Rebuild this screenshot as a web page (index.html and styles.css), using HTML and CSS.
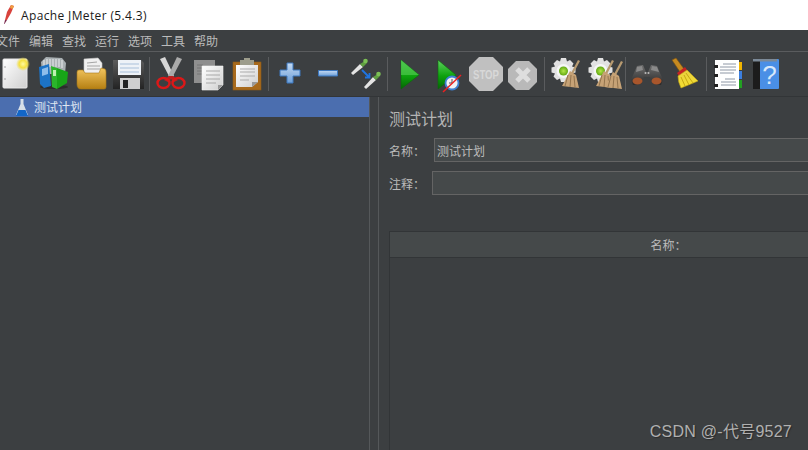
FILE: index.html
```html
<!DOCTYPE html>
<html lang="zh">
<head>
<meta charset="utf-8">
<title>Apache JMeter (5.4.3)</title>
<link rel="stylesheet" href="styles.css">
</head>
<body>
<div class="app">
  <header class="titlebar">
    <svg class="title-icon" width="14" height="20" viewBox="0 0 14 20"><path d="M10 0 L13 1 L10 8 L6 15 L4 15 L6 7 Z" fill="#d8423c"/><path d="M10 0 L13 1 L11.500 4 L9 3 Z" fill="#f0a040"/><path d="M4 15 L6 15 L3.500 19 L3 19 Z" fill="#7b2a4e"/></svg>
    <span class="title-text">Apache JMeter (5.4.3)</span>
  </header>
  <nav class="menubar">
    <span class="menu-item">文件</span><span class="menu-item">编辑</span><span class="menu-item">查找</span><span class="menu-item">运行</span><span class="menu-item">选项</span><span class="menu-item">工具</span><span class="menu-item">帮助</span>
  </nav>
  <div class="toolbar">
    <svg class="shared-defs" width="0" height="0">
      <defs>
        <linearGradient id="gPage" x1="0" y1="0" x2="1" y2="1"><stop offset="0" stop-color="#fff"/><stop offset="1" stop-color="#cfcfcf"/></linearGradient>
        <linearGradient id="gFolder" x1="0" y1="0" x2="0" y2="1"><stop offset="0" stop-color="#f3c65f"/><stop offset="1" stop-color="#b57f12"/></linearGradient>
        <linearGradient id="gPlay" x1="0" y1="0" x2="0" y2="1"><stop offset="0" stop-color="#5fd35f"/><stop offset=".55" stop-color="#0da20d"/><stop offset="1" stop-color="#056505"/></linearGradient>
        <linearGradient id="gBlue" x1="0" y1="0" x2="0" y2="1"><stop offset="0" stop-color="#c4daf3"/><stop offset="1" stop-color="#6d9fd8"/></linearGradient>
        <linearGradient id="gBroom" x1="0" y1="0" x2="0" y2="1"><stop offset="0" stop-color="#e8d040"/><stop offset="1" stop-color="#f5e030"/></linearGradient>
        <linearGradient id="gDisk" x1="0" y1="0" x2="0" y2="1"><stop offset="0" stop-color="#5c5c5c"/><stop offset="1" stop-color="#232323"/></linearGradient>
        <linearGradient id="gBino" x1="0" y1="0" x2="0" y2="1"><stop offset="0" stop-color="#6e6e6e"/><stop offset="1" stop-color="#2a2a2a"/></linearGradient>
        <radialGradient id="gGlow"><stop offset="0" stop-color="#fff9a0"/><stop offset=".55" stop-color="#f4e040"/><stop offset="1" stop-color="#f4e040" stop-opacity="0"/></radialGradient>
        <radialGradient id="gGreen"><stop offset="0" stop-color="#b4e84a"/><stop offset="1" stop-color="#62a812"/></radialGradient>
        <g id="gear"><path d="M11 0h5l1 3.500 3-1.500 3.500 3.500-1.500 3 3.500 1v5l-3.500 1 1.500 3-3.500 3.500-3-1.500-1 3.500h-5l-1-3.500-3 1.500-3.500-3.500 1.500-3-3.500-1v-5l3.500-1-1.500-3 3.500-3.500 3 1.500z" fill="#e2e2e2"/><circle cx="13.500" cy="13" r="7" fill="#f6f6f6"/><circle cx="13.500" cy="13" r="4.500" fill="url(#gGreen)"/></g>
        <g id="broomBrown"><path d="M16 0 L18 1 L11 14 L9 13 Z" fill="#b79a70"/><path d="M8 11 L14 15 L17 28 L0 26 Z" fill="#c6a276"/><path d="M6 15 L3 26 M9 15 L8 27 M12 16 L13 27" stroke="#93744e" fill="none"/></g>
      </defs>
    </svg>
    <!-- new -->
    <svg class="tool" viewBox="0 0 38 44"><rect x="8" y="7" width="24" height="29" rx="1" fill="url(#gPage)" stroke="#e8e8e8"/><circle cx="10" cy="15" r=".8" fill="#999"/><circle cx="10" cy="27" r=".8" fill="#999"/><circle cx="28" cy="12" r="7" fill="url(#gGlow)"/></svg>
    <!-- books -->
    <svg class="tool" viewBox="0 0 38 44"><ellipse cx="21" cy="35" rx="14" ry="2" fill="#2c2c2c"/><path d="M8 10 L13 5 L29 6 L33 11 L32 22 L9 22 Z" fill="#a9b0b3"/><path d="M11 8v8M14 7v8M17 7v8M20 7v8M23 7v8M26 7v8M29 8v8" stroke="#dfe3e4" stroke-width="1.200"/><path d="M6 15 L16 12 L18 34 L11 36 L7 32 Z" fill="#1c73c6"/><path d="M9 17 L15 15 L15 22 L9 24 Z" fill="#8dbdeb"/><path d="M18 14 L24 16 L24 37 L19 35 Z" fill="#2bb52b"/><path d="M24 16 L35 20 L34 31 L24 37 Z" fill="#18a518"/><path d="M20 18h3v6h-3z" fill="#bff0b0"/></svg>
    <!-- open -->
    <svg class="tool" viewBox="0 0 38 44"><path d="M13 7 L27 6 L31 11 L31 24 L13 24 Z" fill="#f0f0f0" stroke="#c8c8c8" stroke-width=".6"/><path d="M16 11 L26 10M16 14 L29 14M16 17 L29 17" stroke="#a5a5a5"/><path d="M6 20 Q6 18 8 18 L12 18 L14 21 L28 21 L30 16 L34 17 Q35 18 35 20 L35 35 Q35 37 33 37 L10 37 Q6 37 6 32 Z" fill="url(#gFolder)" stroke="#a87b18" stroke-width=".6"/></svg>
    <!-- save -->
    <svg class="tool" viewBox="0 0 38 44"><path d="M4 8 L32 8 L35 11 L35 37 L4 37 Z" fill="url(#gDisk)"/><rect x="9" y="8" width="23" height="15" fill="#eef2f7"/><path d="M11 12h19M11 16h19M11 20h19" stroke="#a9c0da"/><rect x="11" y="26" width="20" height="11" fill="#cfcfcf"/><rect x="14" y="28" width="5" height="8" fill="#222"/></svg>
    <i class="sep"></i>
    <!-- cut -->
    <svg class="tool" viewBox="0 0 38 44"><path d="M8 7 L13 5 L22 24 L18 26 Z" fill="#d6d6d6"/><path d="M30 7 L25 5 L16 24 L20 26 Z" fill="#aaaaaa"/><path d="M17 24 L21 24 L26 28 L22 30 L19 27 L16 30 L12 28 Z" fill="#c02020"/><ellipse cx="11.500" cy="31" rx="6" ry="5" fill="none" stroke="#dc1818" stroke-width="2.400"/><ellipse cx="26.500" cy="31" rx="6" ry="5" fill="none" stroke="#dc1818" stroke-width="2.400"/></svg>
    <!-- copy -->
    <svg class="tool" viewBox="0 0 38 44"><rect x="4" y="8" width="21" height="23" fill="#8f8f8f"/><path d="M7 13h6M7 16h6M7 19h6M7 22h6" stroke="#747474"/><path d="M12 14 L33 14 L33 33 L28 38 L12 38 Z" fill="url(#gPage)" stroke="#f4f4f4" stroke-width=".6"/><path d="M16 19h14M16 23h14M16 27h14M16 31h10" stroke="#a8a8a8"/><path d="M28 38 L28 33 L33 33 Z" fill="#999"/></svg>
    <!-- paste -->
    <svg class="tool" viewBox="0 0 38 44"><rect x="5" y="10" width="28" height="28" fill="#a86a1c" stroke="#8f5a16" stroke-width=".6"/><path d="M8 13 L30 13 L30 30 L24 35 L8 35 Z" fill="url(#gPage)"/><path d="M12 17h15M12 20h15M12 24h15M12 28h9" stroke="#ababab"/><path d="M24 35 L24 30 L30 30 Z" fill="#999"/><path d="M12 8 L16 8 L16 6 L22 6 L22 8 L26 8 L26 13 L12 13 Z" fill="#9d9d8c"/></svg>
    <i class="sep"></i>
    <!-- plus -->
    <svg class="tool" viewBox="0 0 38 44"><path d="M16 11h6v7h7v6h-7v7h-6v-7H9v-6h7z" fill="url(#gBlue)" stroke="#3d78c0" stroke-width="1"/></svg>
    <!-- minus -->
    <svg class="tool" viewBox="0 0 38 44"><path d="M9.500 18.500h19v5.500h-19z" fill="url(#gBlue)" stroke="#3d78c0" stroke-width="1"/></svg>
    <!-- dropper expand -->
    <svg class="tool" viewBox="0 0 38 44"><path d="M4 21 L6 23 L16 15 L13 12 Z" fill="#e4e4e4"/><path d="M13 12 L16 15 L20 11 L18 9 Z" fill="#5fa040"/><circle cx="18.500" cy="9" r="2.300" fill="#7cc055"/><path d="M17 35 L19 37 L29 28 L26 25 Z" fill="#e4e4e4"/><path d="M26 25 L29 28 L33 24 L31 22 Z" fill="#5fa040"/><circle cx="31.500" cy="22" r="2.300" fill="#7cc055"/><path d="M15 18 L22 25 M18 25.500 L22.500 25.500 L22.500 21" stroke="#1f74e0" stroke-width="1.800" fill="none"/></svg>
    <i class="sep"></i>
    <!-- play -->
    <svg class="tool" viewBox="0 0 38 44"><path d="M11 8 L29 23 L11 37 Z" fill="url(#gPlay)" stroke="#0a6a0a" stroke-width=".6"/><path d="M11 8 L29 23 L11 23 Z" fill="#48c448" opacity=".75"/></svg>
    <!-- play no pause -->
    <svg class="tool" viewBox="0 0 38 44"><path d="M10 8 L28 23 L10 37 Z" fill="url(#gPlay)" stroke="#0a6a0a" stroke-width=".6"/><circle cx="24" cy="31" r="6.500" fill="#f2f2f2" stroke="#3d7fd0" stroke-width="1.800"/><path d="M24 27v4h-3" stroke="#555" fill="none"/><path d="M15 40 L33 23" stroke="#ee2020" stroke-width="1.500"/></svg>
    <!-- stop -->
    <svg class="tool" viewBox="0 0 38 44"><path d="M13 5h14l10 10v14L27 39H13L3 29V15z" fill="#c0c0c0"/><text class="stop-text" x="7" y="26.500" textLength="26" lengthAdjust="spacingAndGlyphs">STOP</text></svg>
    <!-- shutdown -->
    <svg class="tool" viewBox="0 0 38 44"><path d="M12 9h13l8 8v13l-8 8H12l-8-8V17z" fill="#b9b9b9"/><path d="M13 17 L25 29 M25 17 L13 29" stroke="#dedede" stroke-width="5"/></svg>
    <i class="sep"></i>
    <!-- clear -->
    <svg class="tool" viewBox="0 0 38 44"><use href="#gear" x="3" y="6"/><use href="#broomBrown" x="15" y="8"/></svg>
    <!-- clear all -->
    <svg class="tool" viewBox="0 0 38 44"><use href="#gear" x="2" y="6"/><use href="#broomBrown" x="11" y="8"/><use href="#broomBrown" x="20" y="9"/></svg>
    <i class="sep"></i>
    <!-- binoculars -->
    <svg class="tool" viewBox="0 0 38 44"><path d="M3 28 L9 14 L15 13 L18 20 L20 20 L23 13 L29 14 L35 28 L33 33 L25 32 L22 25 L16 25 L13 32 L5 33 Z" fill="url(#gBino)"/><path d="M9 15 L14 14 L15 18 L8 20 Z" fill="#8a8a8a"/><path d="M24 14 L29 15 L31 20 L23 18 Z" fill="#8a8a8a"/><circle cx="17.500" cy="21" r="1" fill="#bbb"/><circle cx="20.500" cy="21" r="1" fill="#bbb"/><ellipse cx="9.500" cy="29" rx="5" ry="3.500" fill="#a8562c"/><ellipse cx="28.500" cy="29" rx="5" ry="3.500" fill="#a8562c"/></svg>
    <!-- broom yellow -->
    <svg class="tool" viewBox="0 0 38 44"><path d="M6 8 L10 6 L18 17 L14 20 Z" fill="#c68a20" stroke="#7a5312" stroke-width=".6"/><path d="M11 21 L19 15 L21 18 L13 24 Z" fill="#c42323"/><path d="M12 24 L21 18 L32 29 L15 36 Q12 30 12 24 Z" fill="url(#gBroom)" stroke="#c6a812" stroke-width=".6"/><path d="M15 25 L19 34 M18 23 L23 33 M20 21 L27 31" stroke="#c6a812"/></svg>
    <i class="sep"></i>
    <!-- log -->
    <svg class="tool" viewBox="0 0 38 44"><rect x="6" y="8" width="24" height="29" fill="#fff"/><path d="M5 13h4v3H5zM5 22h4v3H5zM5 32h4v3H5z" fill="#222"/><path d="M14 12h13M11 15h16M11 18h16M11 21h14M16 27h10M12 30h15M12 33h15" stroke="#8f98a6"/><rect x="30" y="10" width="3" height="8" fill="#f0b400"/><rect x="30" y="19" width="3" height="8" fill="#3c7fe0"/><rect x="30" y="28" width="3" height="8" fill="#22a022"/></svg>
    <!-- help -->
    <svg class="tool" viewBox="0 0 38 44"><rect x="6" y="7" width="26" height="30" rx="1" fill="#4a8fe6"/><rect x="6" y="7" width="7" height="30" fill="#1c1c1c"/><rect x="6" y="7" width="24" height="2.500" fill="#7c8a98"/><text class="help-text" x="22.500" y="32">?</text></svg>
  </div>
  <main class="workspace">
    <aside class="tree">
      <div class="tree-row">
        <svg class="tree-icon" width="14" height="19" viewBox="0 0 14 19"><path d="M5.500 1 L8.500 1 L8.500 6 L13 17 L1 17 L5.500 6 Z" fill="#d7dfe8"/><path d="M3.500 12 L10.500 12 L13 18 L1 18 Z" fill="#1266c8"/></svg>
        <span class="tree-label">测试计划</span>
      </div>
    </aside>
    <div class="splitter"></div>
    <section class="editor">
      <h1 class="heading">测试计划</h1>
      <div class="field-row">
        <label class="label label-name">名称：</label>
        <div class="field">测试计划</div>
      </div>
      <div class="field-row">
        <label class="label label-comment">注释：</label>
        <div class="field"></div>
      </div>
      <div class="table">
        <div class="table-head">名称：</div>
      </div>
    </section>
  </main>
  <div class="watermark">CSDN @-代号9527</div>
</div>
</body>
</html>
```

FILE: styles.css
```css
* { box-sizing: border-box; }
html, body { margin: 0; height: 100%; overflow: hidden; }
body {
  font-family: "Noto Sans CJK SC", "Noto Sans", sans-serif;
  font-size: 12px;
  color: #bbbbbb;
  background: #3c3f41;
}
.app {
  position: relative;
  display: flex;
  flex-direction: column;
  width: 808px;
  height: 450px;
  overflow: hidden;
}
.titlebar {
  display: flex;
  align-items: center;
  height: 30px;
  flex: none;
  background: #ffffff;
  color: #1a1a1a;
  padding-left: 1px;
}
.title-icon { flex: none; margin-right: 6px; }
.title-text {
  font-family: "Open Sans", "Liberation Sans", sans-serif;
  font-size: 12px;
  letter-spacing: 0.36px;
}
.menubar {
  display: flex;
  align-items: center;
  flex: none;
  height: 22px;
  margin-left: -9px;
  border-bottom: 1px solid #5a5c5e;
  line-height: 21px;
}
.menu-item { width: 33px; padding-left: 5px; flex: none; }
.toolbar {
  display: flex;
  flex: none;
  align-items: stretch;
  height: 45px;
  margin-left: -5px;
  border-bottom: 1px solid #323537;
}
.shared-defs { position: absolute; }
.tool { width: 38px; height: 44px; flex: none; }
.sep {
  display: block;
  flex: none;
  width: 1px;
  height: 34px;
  margin: 5px 2px 0;
  background: #5a5c5e;
}
.stop-text {
  font-family: "Liberation Sans", sans-serif;
  font-size: 12px;
  font-weight: 700;
  fill: #d8d8d8;
}
.help-text {
  font-family: "Liberation Sans", sans-serif;
  font-size: 26px;
  fill: #d8e8fa;
  text-anchor: middle;
}
.workspace { display: flex; flex: 1; min-height: 0; }
.tree { width: 369px; flex: none; }
.tree-row {
  display: flex;
  align-items: center;
  height: 20px;
  padding-left: 15px;
  background: #4b6eaf;
  color: #dfe6f2;
  line-height: 22px;
}
.tree-icon { flex: none; margin-right: 5px; }
.splitter {
  width: 10px;
  flex: none;
  border-left: 1px solid #55585a;
  border-right: 1px solid #55585a;
}
.editor {
  flex: 1;
  min-width: 0;
  padding: 9px 0 0 10px;
  display: flex;
  flex-direction: column;
}
.heading {
  margin: 0;
  height: 24px;
  font-size: 16px;
  font-weight: 400;
  line-height: 24px;
  color: #b4b4b4;
}
.field-row {
  display: flex;
  align-items: center;
  height: 24px;
  margin-top: 8px;
  margin-right: -10px;
}
.field-row + .field-row { margin-top: 9px; }
.label { flex: none; white-space: nowrap; }
.label-name { width: 45px; }
.label-comment { width: 43px; }
.field {
  flex: 1;
  height: 24px;
  padding-left: 2px;
  background: #45494a;
  border: 1px solid #646464;
  line-height: 24px;
}
.table {
  flex: 1;
  margin-top: 36px;
  margin-right: -10px;
  border: 1px solid #323537;
  border-bottom: 0;
}
.table-head {
  height: 26px;
  background: #45494a;
  border-bottom: 1px solid #323537;
  text-align: center;
  line-height: 26px;
  padding-left: 130px;
}
.watermark {
  position: absolute;
  right: 16px;
  bottom: 8px;
  font-family: "Liberation Sans", "Noto Sans CJK SC", sans-serif;
  font-size: 16px;
  letter-spacing: 0.25px;
  line-height: 20px;
  color: #b0b0b0;
  text-shadow: 1px 1px 1px #2c2c2c;
}
```
